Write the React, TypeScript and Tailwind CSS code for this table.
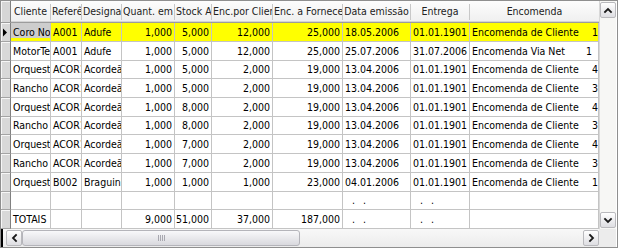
import React from "react";

const colW = [
  "w-[40px]",
  "w-[31px]",
  "w-[40px]",
  "w-[53px]",
  "w-[37px]",
  "w-[61px]",
  "w-[70px]",
  "w-[68px]",
  "w-[59px]",
  "w-[129px]",
];

const headers = [
  "Cliente",
  "Referência",
  "Designação",
  "Quant. em Stock",
  "Stock Actual",
  "Enc.por Cliente",
  "Enc. a Fornecedor",
  "Data emissão",
  "Entrega",
  "Encomenda",
];

const rightCols = [3, 4, 5, 6];

type Row = { cells: string[]; num: string; numPad?: boolean; dots?: boolean };

const rows: Row[] = [
  { cells: ["Coro Novo", "A001", "Adufe", "1,000", "5,000", "12,000", "25,000", "18.05.2006", "01.01.1901", "Encomenda de Cliente"], num: "1" },
  { cells: ["MotorTec", "A001", "Adufe", "1,000", "5,000", "12,000", "25,000", "25.07.2006", "31.07.2006", "Encomenda Via Net"], num: "1", numPad: true },
  { cells: ["Orquestra", "ACOR1", "Acordeão", "1,000", "5,000", "2,000", "19,000", "13.04.2006", "01.01.1901", "Encomenda de Cliente"], num: "4" },
  { cells: ["Rancho Folclórico", "ACOR1", "Acordeão", "1,000", "5,000", "2,000", "19,000", "13.04.2006", "01.01.1901", "Encomenda de Cliente"], num: "3" },
  { cells: ["Orquestra", "ACOR1", "Acordeão", "1,000", "8,000", "2,000", "19,000", "13.04.2006", "01.01.1901", "Encomenda de Cliente"], num: "4" },
  { cells: ["Rancho Folclórico", "ACOR1", "Acordeão", "1,000", "8,000", "2,000", "19,000", "13.04.2006", "01.01.1901", "Encomenda de Cliente"], num: "3" },
  { cells: ["Orquestra", "ACOR1", "Acordeão", "1,000", "7,000", "2,000", "19,000", "13.04.2006", "01.01.1901", "Encomenda de Cliente"], num: "4" },
  { cells: ["Rancho Folclórico", "ACOR1", "Acordeão", "1,000", "7,000", "2,000", "19,000", "13.04.2006", "01.01.1901", "Encomenda de Cliente"], num: "3" },
  { cells: ["Orquestra", "B002", "Braguinha", "1,000", "1,000", "1,000", "23,000", "04.01.2006", "01.01.1901", "Encomenda de Cliente"], num: "1" },
  { cells: ["", "", "", "", "", "", "", "", "", ""], num: "", dots: true },
  { cells: ["TOTAIS", "", "", "9,000", "51,000", "37,000", "187,000", "", "", ""], num: "", dots: true },
];

const rowH = ["h-[19px]", "h-[19px]", "h-[18px]", "h-[19px]", "h-[19px]", "h-[18px]", "h-[19px]", "h-[19px]", "h-[19px]", "h-[18px]", "h-[19px]"];

function Dots() {
  return (
    <span className="flex items-center">
      <span className="ml-[7px]">.</span>
      <span className="ml-[8px]">.</span>
    </span>
  );
}

function Chevron({ dir }: { dir: "up" | "down" | "left" | "right" }) {
  const pts =
    dir === "up"
      ? "2,7 5,4 8,7"
      : dir === "down"
      ? "2,4 5,7 8,4"
      : dir === "left"
      ? "7,2 4,5 7,8"
      : "4,2 7,5 4,8";
  return (
    <svg width="10" height="10" viewBox="0 0 10 10">
      <polyline points={pts} fill="none" stroke="#1a1a1a" strokeWidth="1.8" strokeLinecap="square" />
    </svg>
  );
}

function ScrollBtn({ dir }: { dir: "up" | "down" | "left" | "right" }) {
  return (
    <div className="w-[16px] h-[16px] shrink-0 flex items-center justify-center rounded-[2px] border border-[#b9b9bd] bg-gradient-to-b from-[#ffffff] to-[#dedee2]">
      <Chevron dir={dir} />
    </div>
  );
}

export default function App() {
  return (
    <div
      className="w-[618px] h-[248px] bg-white border border-[#8f8f8f] flex flex-col overflow-hidden text-[10.5px] text-black leading-none"
      style={{ fontFamily: '"DejaVu Sans Condensed", "Liberation Sans", sans-serif' }}
    >
      <div className="flex h-[228px]">
        {/* grid */}
        <div className="w-[598px] flex flex-col">
          {/* header */}
          <div className="flex h-[22px] border-b border-[#9c9c9c] bg-gradient-to-b from-[#fdfdfd] to-[#efefef] shadow-[inset_0_-1px_0_#d4d4d4]">
            <div className="w-[10px] shrink-0 bg-[#d6d6d6] border-r border-[#808080] shadow-[inset_1px_1px_0_#f4f4f4]" />
            {headers.map((h, i) => (
              <div key={i} className={`${colW[i]} shrink-0 flex items-center overflow-hidden`}>
                <div className="flex-1 min-w-0 overflow-hidden flex justify-center-safe text-[#222]">
                  <span className="whitespace-nowrap shrink-0 px-[1px]">{h}</span>
                </div>
                {i < headers.length - 1 && (
                  <div className="flex shrink-0 h-[16px]">
                    <div className="w-px bg-[#c8c8c8]" />
                  </div>
                )}
              </div>
            ))}
          </div>
          {/* rows */}
          {rows.map((r, ri) => {
            const sel = ri === 0;
            return (
              <div key={ri} className={`flex ${rowH[ri]} shrink-0`}>
                <div className="w-[10px] shrink-0 bg-[#d8d8d8] border-r border-[#808080] border-b border-b-[#a4a4a4] shadow-[inset_1px_1px_0_#f6f6f6] flex items-center">
                  {sel && (
                    <svg width="6" height="9" viewBox="0 0 6 9" className="ml-[1px]">
                      <polygon points="1,0.5 5,4.5 1,8.5" fill="#000" />
                    </svg>
                  )}
                </div>
                {r.cells.map((c, ci) => {
                  const right = rightCols.includes(ci);
                  const cur = sel && ci === 0;
                  const bg = cur
                    ? "bg-[#cdcdcd] shadow-[inset_0_-3px_0_#ffff00]"
                    : sel
                    ? "bg-[#ffff00]"
                    : "bg-white";
                  return (
                    <div
                      key={ci}
                      className={`${colW[ci]} shrink-0 border-r border-b border-[#c4c4c4] ${bg} flex items-center overflow-hidden ${
                        right ? "justify-end pr-[2px]" : "pl-[2px]"
                      }`}
                    >
                      {ci === 9 ? (
                        <div className="flex-1 flex items-center justify-between min-w-0">
                          <span className="whitespace-nowrap">{c}</span>
                          <span className={r.numPad ? "pr-[6px]" : "pr-0"}>{r.num}</span>
                        </div>
                      ) : (ci === 7 || ci === 8) && r.dots ? (
                        <Dots />
                      ) : (
                        <span className="whitespace-nowrap">{c}</span>
                      )}
                    </div>
                  );
                })}
              </div>
            );
          })}
        </div>
        {/* vertical scrollbar */}
        <div className="w-[17px] shrink-0 border-l border-[#d8d8d8] bg-[#f7f7f5] flex flex-col items-center justify-between py-[1px]">
          <ScrollBtn dir="up" />
          <ScrollBtn dir="down" />
        </div>
      </div>
      {/* horizontal scrollbar */}
      <div className="flex h-[18px] shrink-0">
        <div className="w-[598px] flex items-center bg-gradient-to-b from-[#f8f8f8] to-[#ececec]">
          <div className="w-[2px] h-full bg-black shrink-0" />
          <div className="w-[3px] shrink-0" />
          <ScrollBtn dir="left" />
          <div className="w-[278px] h-[16px] shrink-0 rounded-[3px] border border-[#b4b4ba] bg-gradient-to-b from-[#f8f8fa] to-[#d9d9de] flex items-center justify-center">
            <div className="flex gap-[1px]">
              <div className="w-px h-[6px] bg-[#a8a8b0]" />
              <div className="w-px h-[6px] bg-[#a8a8b0]" />
              <div className="w-px h-[6px] bg-[#a8a8b0]" />
              <div className="w-px h-[6px] bg-[#a8a8b0]" />
            </div>
          </div>
          <div className="flex-1" />
          <ScrollBtn dir="right" />
        </div>
        <div className="w-[17px] shrink-0 bg-[#ececec]" />
      </div>
    </div>
  );
}
